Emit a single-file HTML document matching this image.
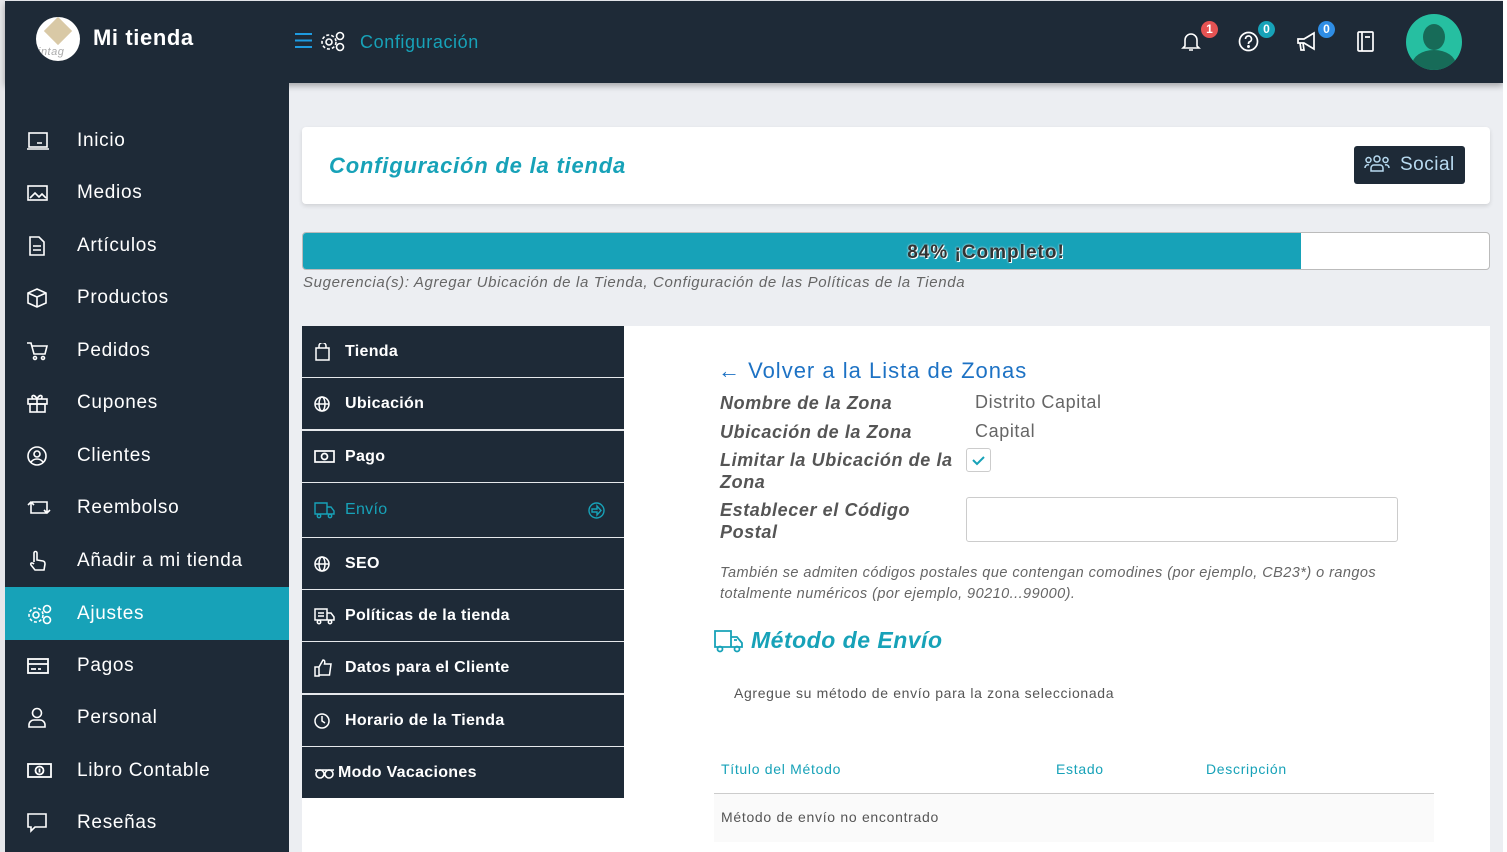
<!DOCTYPE html>
<html><head><meta charset="utf-8"><style>
*{box-sizing:border-box;margin:0;padding:0}
body{width:1507px;height:852px;overflow:hidden;background:#eceef2;font-family:"Liberation Sans",sans-serif;position:relative;letter-spacing:.5px}
.abs{position:absolute}
#lb{left:0;top:0;width:5px;height:852px;background:#e6e7ea}
#hdr{left:5px;top:1px;width:1498px;height:82px;background:#1e2a37;box-shadow:0 3px 6px rgba(0,0,0,.3)}
#rb{left:1503px;top:0;width:4px;height:852px;background:#fff}
#side{left:5px;top:83px;width:284px;height:769px;background:#1e2a37}
.si{position:absolute;left:0;width:284px;height:53px;color:#fff;font-size:19px;display:flex;align-items:center;letter-spacing:.7px}
.si svg{position:absolute;left:22px}
.si span{position:absolute;left:72px}
.si.act{background:#17a2b8}
.tab{position:absolute;left:302px;width:322px;height:51px;background:#1e2a37;color:#fff;font-size:16px;font-weight:bold;display:flex;align-items:center;letter-spacing:.3px}
.tab svg{position:absolute;left:12px}
.tab span{position:absolute;left:43px}
.lbl{position:absolute;left:720px;font-style:italic;font-weight:bold;color:#555;font-size:18px;line-height:22px;letter-spacing:.6px}
.val{position:absolute;left:975px;color:#666;font-size:18px;letter-spacing:.6px}
</style></head><body>
<div id="lb" class="abs"></div>
<div id="hdr" class="abs">
 <div class="abs" style="left:31px;top:16px;width:44px;height:44px;border-radius:50%;background:#fff;overflow:hidden">
  <div class="abs" style="left:12px;top:4px;width:20px;height:20px;background:#d9c9a6;transform:rotate(45deg)"></div>
  <div class="abs" style="left:2px;top:29px;font-size:11px;font-style:italic;color:#aaa">intag</div></div>
 <div class="abs" style="left:88px;top:24px;color:#fff;font-size:22px;font-weight:bold;letter-spacing:.6px">Mi tienda</div>
 <svg class="abs" style="left:289px;top:31px" width="19" height="17"><path d="M1 2h17M1 8.5h17M1 15h17" stroke="#1e9be0" stroke-width="2"/></svg>
 <svg class="abs" style="left:315px;top:29px" width="26" height="22" fill="none" stroke="#fff" stroke-width="1.6"><circle cx="9" cy="12" r="3"/><circle cx="9" cy="12" r="7" stroke-dasharray="3 2"/><circle cx="20" cy="6" r="3.5"/><circle cx="20" cy="17" r="3.5"/></svg>
 <div class="abs" style="left:355px;top:31px;color:#17a2b8;font-size:18px;letter-spacing:.6px">Configuración</div>
 <svg class="abs" style="left:1176px;top:29px" width="20" height="22" fill="none" stroke="#fff" stroke-width="1.6"><path d="M4 16V10a6 6 0 0 1 12 0v6l2 2H2zM8 20h4"/></svg>
 <div class="abs" style="left:1196px;top:20px;width:17px;height:17px;border-radius:50%;background:#e55353;color:#fff;font-size:12px;font-weight:bold;text-align:center;line-height:17px;letter-spacing:0">1</div>
 <svg class="abs" style="left:1233px;top:30px" width="21" height="21" fill="none" stroke="#fff" stroke-width="1.7"><circle cx="10.5" cy="10.5" r="9"/><path d="M7.5 8a3 3 0 1 1 4 2.8c-1 .4-1 1-1 2.2"/><circle cx="10.5" cy="15.5" r=".6" fill="#fff"/></svg>
 <div class="abs" style="left:1253px;top:20px;width:17px;height:17px;border-radius:50%;background:#17a2b8;color:#fff;font-size:12px;font-weight:bold;text-align:center;line-height:17px;letter-spacing:0">0</div>
 <svg class="abs" style="left:1291px;top:30px" width="24" height="22" fill="none" stroke="#fff" stroke-width="1.7"><path d="M2 8h6l10-6v16L8 12H2zM4 12l1 7h3l-1-7"/></svg>
 <div class="abs" style="left:1313px;top:20px;width:17px;height:17px;border-radius:50%;background:#2f8de4;color:#fff;font-size:12px;font-weight:bold;text-align:center;line-height:17px;letter-spacing:0">0</div>
 <svg class="abs" style="left:1352px;top:30px" width="18" height="21" fill="none" stroke="#fff" stroke-width="1.7"><rect x="1" y="1" width="15" height="19" rx="1"/><path d="M5 1v19M8 6h5"/></svg>
 <div class="abs" style="left:1401px;top:13px;width:56px;height:56px;border-radius:50%;background:#26bfa1;overflow:hidden">
  <div class="abs" style="left:17px;top:10px;width:22px;height:26px;border-radius:50%;background:#176b58"></div>
  <div class="abs" style="left:6px;top:36px;width:44px;height:30px;border-radius:50% 50% 0 0;background:#176b58"></div></div>
</div>
<div id="rb" class="abs"></div>
<div id="side" class="abs">
 <div class="si" style="top:31px"><svg width="22" height="20" fill="none" stroke="#fff" stroke-width="1.6"><rect x="2" y="2" width="18" height="14"/><path d="M0 18h22M10 12h5"/></svg><span>Inicio</span></div>
 <div class="si" style="top:83px"><svg width="22" height="18" fill="none" stroke="#fff" stroke-width="1.6"><rect x="1" y="2" width="19" height="14"/><path d="M3 14l5-5 4 4 3-3 4 4"/></svg><span>Medios</span></div>
 <div class="si" style="top:136px"><svg width="22" height="20" fill="none" stroke="#fff" stroke-width="1.6"><path d="M3 1h9l5 5v13H3zM6 10h8M6 14h8"/></svg><span>Artículos</span></div>
 <div class="si" style="top:188px"><svg width="22" height="20" fill="none" stroke="#fff" stroke-width="1.6"><path d="M10 1l9 4v10l-9 4-9-4V5zM1 5l9 4 9-4M10 9v10"/></svg><span>Productos</span></div>
 <div class="si" style="top:241px"><svg width="22" height="20" fill="none" stroke="#fff" stroke-width="1.6"><path d="M0 2h4l3 11h11l2-8H5"/><circle cx="8" cy="17" r="1.5"/><circle cx="16" cy="17" r="1.5"/></svg><span>Pedidos</span></div>
 <div class="si" style="top:293px"><svg width="22" height="20" fill="none" stroke="#fff" stroke-width="1.6"><rect x="1" y="6" width="19" height="5"/><rect x="3" y="11" width="15" height="8"/><path d="M10 6v13M10 6C7 0 3 3 6 6M10 6c3-6 7-3 4 0"/></svg><span>Cupones</span></div>
 <div class="si" style="top:346px"><svg width="22" height="20" fill="none" stroke="#fff" stroke-width="1.6"><circle cx="10" cy="10" r="9"/><circle cx="10" cy="8" r="3"/><path d="M4 16c3-4 9-4 12 0"/></svg><span>Clientes</span></div>
 <div class="si" style="top:398px"><svg width="24" height="20" fill="none" stroke="#fff" stroke-width="1.6"><path d="M4 4v11h16M1 7l3-3 3 3M20 15V4H5M17 12l3 3 3-3"/></svg><span>Reembolso</span></div>
 <div class="si" style="top:451px"><svg width="22" height="22" fill="none" stroke="#fff" stroke-width="1.6"><path d="M7 12V3a1.5 1.5 0 0 1 3 0v7l6 1c2 .5 2 2 2 3l-1 6H8l-4-5c-1-2 1-3 3-1"/></svg><span>Añadir a mi tienda</span></div>
 <div class="si act" style="top:504px"><svg width="26" height="22" fill="none" stroke="#fff" stroke-width="1.6"><circle cx="9" cy="12" r="3"/><circle cx="9" cy="12" r="7" stroke-dasharray="3 2"/><circle cx="20" cy="6" r="3.5"/><circle cx="20" cy="17" r="3.5"/></svg><span>Ajustes</span></div>
 <div class="si" style="top:556px"><svg width="22" height="18" fill="none" stroke="#fff" stroke-width="1.8"><rect x="1" y="2" width="20" height="14"/><path d="M1 7h20M4 12h5M11 12h3"/></svg><span>Pagos</span></div>
 <div class="si" style="top:608px"><svg width="22" height="22" fill="none" stroke="#fff" stroke-width="1.6"><circle cx="10" cy="6" r="4.5"/><path d="M2 20v-2a5 5 0 0 1 5-5h6a5 5 0 0 1 5 5v2z"/></svg><span>Personal</span></div>
 <div class="si" style="top:661px"><svg width="26" height="18" fill="none" stroke="#fff" stroke-width="1.8"><rect x="1" y="2" width="23" height="13"/><circle cx="12.5" cy="8.5" r="4"/><path d="M12.5 6.5v4"/></svg><span>Libro Contable</span></div>
 <div class="si" style="top:713px"><svg width="22" height="22" fill="none" stroke="#fff" stroke-width="1.6"><path d="M1 2h18v13H8l-4 4v-4H1z"/></svg><span>Reseñas</span></div>
</div>
<div class="abs" style="left:302px;top:127px;width:1188px;height:77px;background:#fff;border-radius:4px;box-shadow:0 2px 4px rgba(0,0,0,.12)">
 <div class="abs" style="left:27px;top:26px;color:#17a2b8;font-size:22px;font-style:italic;font-weight:bold;letter-spacing:.8px">Configuración de la tienda</div>
 <div class="abs" style="left:1052px;top:19px;width:111px;height:38px;background:#1e2a37;border-radius:3px;color:#b8daf0;font-size:19px;line-height:38px;padding-left:46px">Social</div>
 <svg class="abs" style="left:1062px;top:28px" width="26" height="18" fill="none" stroke="#b8daf0" stroke-width="1.5"><circle cx="13" cy="4" r="3"/><circle cx="4.5" cy="5" r="2.5"/><circle cx="21.5" cy="5" r="2.5"/><path d="M7 16v-3a3 3 0 0 1 3-3h6a3 3 0 0 1 3 3v3zM1 13a3 3 0 0 1 4-3M25 13a3 3 0 0 0-4-3"/></svg>
</div>
<div class="abs" style="left:302px;top:232px;width:1188px;height:38px;background:#fff;border:1px solid #bbb;border-radius:4px;overflow:hidden">
 <div class="abs" style="left:0;top:0;width:998px;height:38px;background:#17a2b8"></div>
 <div class="abs" style="left:0;top:9px;width:1366px;text-align:center;font-size:19px;font-weight:bold;color:#333;letter-spacing:1px;text-shadow:0 0 2px #fff,1px 1px 0 #fff">84% ¡Completo!</div>
</div>
<div class="abs" style="left:303px;top:274px;font-size:15px;font-style:italic;color:#666;letter-spacing:.65px">Sugerencia(s): Agregar Ubicación de la Tienda, Configuración de las Políticas de la Tienda</div>
<div class="abs" style="left:302px;top:326px;width:1188px;height:526px;background:#fff"></div>
<div class="abs" style="left:302px;top:326px;width:322px;height:472px;background:#e6e8eb"></div>
<div class="tab" style="top:326px"><svg width="18" height="18" fill="none" stroke="#fff" stroke-width="1.5"><rect x="2" y="5" width="13" height="12"/><path d="M5 5V3a3.5 3.5 0 0 1 7 0v2"/></svg><span>Tienda</span></div>
<div class="tab" style="top:378px"><svg width="18" height="18" fill="none" stroke="#fff" stroke-width="1.5"><circle cx="8" cy="9" r="7"/><ellipse cx="8" cy="9" rx="3" ry="7"/><path d="M1 9h14"/></svg><span>Ubicación</span></div>
<div class="tab" style="top:431px"><svg width="22" height="18" fill="none" stroke="#fff" stroke-width="1.7"><rect x="1" y="3" width="19" height="11"/><circle cx="10.5" cy="8.5" r="3"/></svg><span>Pago</span></div>
<div class="tab" style="top:483px;height:54px;color:#17a2b8;font-weight:normal"><svg width="22" height="18" fill="none" stroke="#17a2b8" stroke-width="1.4"><path d="M1 2h12v11H1zM13 6h4l3 4v3h-7"/><circle cx="5" cy="15" r="1.7"/><circle cx="16" cy="15" r="1.7"/></svg><span>Envío</span>
 <svg class="abs" style="left:286px;top:19px" width="17" height="17" fill="none" stroke="#17a2b8" stroke-width="1.4"><circle cx="8.5" cy="8.5" r="7.5"/><path d="M4 7h5V4l4 4.5-4 4.5v-3H4z"/></svg></div>
<div class="tab" style="top:538px"><svg width="18" height="18" fill="none" stroke="#fff" stroke-width="1.5"><circle cx="8" cy="9" r="7"/><ellipse cx="8" cy="9" rx="3" ry="7"/><path d="M1 9h14"/></svg><span>SEO</span></div>
<div class="tab" style="top:590px"><svg width="22" height="18" fill="none" stroke="#fff" stroke-width="1.5"><path d="M1 2h12v11H1zM13 6h4l3 4v3h-7M4 6h6M4 9h6"/><circle cx="5" cy="15" r="1.7"/><circle cx="16" cy="15" r="1.7"/></svg><span>Políticas de la tienda</span></div>
<div class="tab" style="top:642px"><svg width="20" height="18" fill="none" stroke="#fff" stroke-width="1.5"><path d="M1 8h4v9H1zM5 8l4-7c2 0 2 2 1.5 4H17l-1.5 11H5"/></svg><span>Datos para el Cliente</span></div>
<div class="tab" style="top:695px"><svg width="18" height="18" fill="none" stroke="#fff" stroke-width="1.5"><circle cx="8" cy="9" r="7"/><path d="M8 4v5l3 2"/></svg><span>Horario de la Tienda</span></div>
<div class="tab" style="top:747px"><svg width="22" height="18" fill="none" stroke="#fff" stroke-width="1.6"><circle cx="6" cy="10" r="4"/><circle cx="15" cy="10" r="4"/><path d="M1 6h19"/></svg><span style="left:36px">Modo Vacaciones</span></div>
<div class="abs" style="left:718px;top:358px;color:#1d72c4;font-size:22px;letter-spacing:1px">← Volver a la Lista de Zonas</div>
<div class="lbl" style="top:392px">Nombre de la Zona</div><div class="val" style="top:392px">Distrito Capital</div>
<div class="lbl" style="top:421px">Ubicación de la Zona</div><div class="val" style="top:421px">Capital</div>
<div class="lbl" style="top:449px;width:245px">Limitar la Ubicación de la Zona</div>
<div class="abs" style="left:966px;top:448px;width:25px;height:24px;border:1px solid #ccc;border-radius:3px"><svg width="23" height="22"><path d="M6 11l4 4 7-7" stroke="#17a2b8" stroke-width="2" fill="none"/></svg></div>
<div class="lbl" style="top:499px;width:220px">Establecer el Código Postal</div>
<div class="abs" style="left:966px;top:497px;width:432px;height:45px;border:1px solid #ccc;border-radius:3px"></div>
<div class="abs" style="left:720px;top:563px;width:715px;font-size:14.5px;font-style:italic;color:#666;line-height:21px;letter-spacing:.45px">También se admiten códigos postales que contengan comodines (por ejemplo, CB23*) o rangos totalmente numéricos (por ejemplo, 90210...99000).</div>
<svg class="abs" style="left:714px;top:629px" width="30" height="24" fill="none" stroke="#17a2b8" stroke-width="1.8"><path d="M1 2h16v16H1zM17 8h6l5 6v4H17M20 11h3"/><circle cx="6" cy="20" r="2.5"/><circle cx="23" cy="20" r="2.5"/></svg>
<div class="abs" style="left:751px;top:627px;color:#17a2b8;font-size:23px;font-style:italic;font-weight:bold">Método de Envío</div>
<div class="abs" style="left:734px;top:685px;color:#555;font-size:14px;letter-spacing:.65px">Agregue su método de envío para la zona seleccionada</div>
<div class="abs" style="left:721px;top:761px;color:#17a2b8;font-size:14px;letter-spacing:.7px">Título del Método</div>
<div class="abs" style="left:1056px;top:761px;color:#17a2b8;font-size:14px;letter-spacing:.7px">Estado</div>
<div class="abs" style="left:1206px;top:761px;color:#17a2b8;font-size:14px;letter-spacing:.7px">Descripción</div>
<div class="abs" style="left:714px;top:793px;width:720px;height:1px;background:#ccc"></div>
<div class="abs" style="left:714px;top:794px;width:720px;height:48px;background:#fafafa"></div>
<div class="abs" style="left:721px;top:809px;color:#555;font-size:14px;letter-spacing:.7px">Método de envío no encontrado</div>
</body></html>
